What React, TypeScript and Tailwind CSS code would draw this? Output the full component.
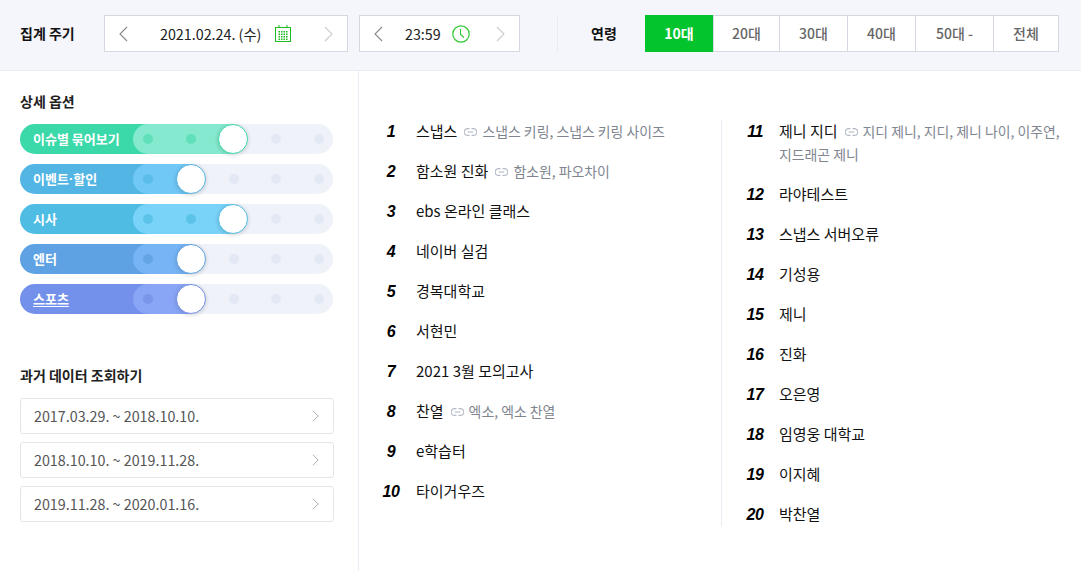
import React from 'react';

const FONT = "font-['Noto_Sans_CJK_KR','Noto_Sans',sans-serif]";

const options = [
  { id: 'issue', label: <>이슈별 묶어보기</>, base: 'bg-[#3bd9aa]', light: 'bg-[#84e9ce]', ring: 'border-[#3bd9aa]', dot: 'bg-[#5fe0ba]', step: 2 },
  { id: 'event', label: <>이벤트<span className="font-['Liberation_Sans',sans-serif]">·</span>할인</>, base: 'bg-[#52b5e3]', light: 'bg-[#70c8f7]', ring: 'border-[#52b5e3]', dot: 'bg-[#5bbdea]', step: 1 },
  { id: 'news', label: <>시사</>, base: 'bg-[#4fbde3]', light: 'bg-[#79d3f8]', ring: 'border-[#4fbde3]', dot: 'bg-[#5cc3e8]', step: 2 },
  { id: 'enter', label: <>엔터</>, base: 'bg-[#5ea2e3]', light: 'bg-[#76b4f6]', ring: 'border-[#5ea2e3]', dot: 'bg-[#64a5e6]', step: 1 },
  { id: 'sports', label: <span className="underline underline-offset-2">스포츠</span>, base: 'bg-[#7391ea]', light: 'bg-[#88a5f6]', ring: 'border-[#7391ea]', dot: 'bg-[#7a96ea]', step: 1 },
];

const history = ['2017.03.29. ~ 2018.10.10.', '2018.10.10. ~ 2019.11.28.', '2019.11.28. ~ 2020.01.16.'];

const ages = [
  { label: '10대', w: 'w-[68px]' },
  { label: '20대', w: 'w-[66px]' },
  { label: '30대', w: 'w-[68px]' },
  { label: '40대', w: 'w-[68px]' },
  { label: '50대 -', w: 'w-[78px]' },
  { label: '전체', w: 'w-[65px]' },
];

const left = [
  { n: 1, t: '스냅스', sub: '스냅스 키링, 스냅스 키링 사이즈' },
  { n: 2, t: '함소원 진화', sub: '함소원, 파오차이' },
  { n: 3, t: 'ebs 온라인 클래스' },
  { n: 4, t: '네이버 실검' },
  { n: 5, t: '경복대학교' },
  { n: 6, t: '서현민' },
  { n: 7, t: '2021 3월 모의고사' },
  { n: 8, t: '찬열', sub: '엑소, 엑소 찬열' },
  { n: 9, t: 'e학습터' },
  { n: 10, t: '타이거우즈' },
];

const right = [
  { n: 11, t: '제니 지디', sub: '지디 제니, 지디, 제니 나이, 이주연, 지드래곤 제니' },
  { n: 12, t: '라야테스트' },
  { n: 13, t: '스냅스 서버오류' },
  { n: 14, t: '기성용' },
  { n: 15, t: '제니' },
  { n: 16, t: '진화' },
  { n: 17, t: '오은영' },
  { n: 18, t: '임영웅 대학교' },
  { n: 19, t: '이지혜' },
  { n: 20, t: '박찬열' },
];

function Chevron({ dir, className }: { dir: 'left' | 'right'; className: string }) {
  return (
    <svg width="9" height="16" viewBox="0 0 9 16" fill="none" className={className}>
      <path d={dir === 'left' ? 'M8 1 1 8l7 7' : 'M1 1l7 7-7 7'} stroke="currentColor" strokeWidth="1.1" />
    </svg>
  );
}

function CalendarIcon() {
  const cells = [];
  for (let r = 0; r < 4; r++) {
    for (let c = 0; c < 4; c++) {
      cells.push(<rect key={`${r}-${c}`} x={3.5 + c * 2.5} y={6 + r * 2.5} width="1.5" height="1.5" fill="#1fbb1f" />);
    }
  }
  return (
    <svg width="16" height="17" viewBox="0 0 16 17" fill="none">
      <rect x="0.5" y="2.5" width="15" height="14" stroke="#1fbb1f" />
      <path d="M4 0v3M12 0v3" stroke="#1fbb1f" />
      {cells}
    </svg>
  );
}

function ClockIcon() {
  return (
    <svg width="18" height="18" viewBox="0 0 18 18" fill="none">
      <circle cx="9" cy="9" r="8.2" stroke="#2fc72f" strokeWidth="1.2" />
      <path d="M8.5 4v5.5l3.5 3" stroke="#2fc72f" strokeWidth="1.1" />
    </svg>
  );
}

function LinkIcon() {
  return (
    <svg width="13" height="8" viewBox="0 0 13 8" fill="none" className="inline-block align-[1px] ml-[7px] mr-[5px]">
      <path d="M5.5 0.6H3.6a3.4 3.4 0 0 0 0 6.8h1.9M7.5 0.6h1.9a3.4 3.4 0 0 1 0 6.8H7.5" stroke="#b3b9c6" strokeWidth="1.1" />
      <path d="M3.8 4h5.4" stroke="#b3b9c6" strokeWidth="1.1" />
    </svg>
  );
}

function Toggle({ o }: { o: (typeof options)[number] }) {
  const dotColor = (i: number) => (i <= o.step - 1 ? o.dot : 'bg-[#e2e8f4]');
  return (
    <div className="relative h-[30px] w-[313px] rounded-full bg-[#eff2f9]">
      <div className={`h-full w-[130px] rounded-l-full flex items-center pl-[13px] text-[13px] font-bold text-white ${o.base}`}>
        {o.label}
      </div>
      <div className={`absolute left-[113px] top-0 h-full rounded-l-[15px] ${o.step === 2 ? 'w-[100px]' : 'w-[58px]'} ${o.light}`} />
      <div className="absolute left-[123px] top-[10px] flex gap-[32.75px]">
        {[0, 1, 2, 3, 4].map((i) => (
          <span key={i} className={`h-[10px] w-[10px] rounded-full ${dotColor(i)}`} />
        ))}
      </div>
      <div
        className={`absolute top-0 h-[30px] w-[30px] rounded-full border bg-white shadow-[0_1px_4px_rgba(0,0,0,0.18)] ${o.ring} ${o.step === 2 ? 'left-[198px]' : 'left-[156px]'}`}
      />
    </div>
  );
}

function Row({ item, numClass }: { item: { n: number; t: string; sub?: string }; numClass: string }) {
  return (
    <li className="flex mb-[17px] last:mb-0 text-[15px] leading-[23px]">
      <span className={`shrink-0 text-center font-['Liberation_Sans',sans-serif] text-[16px] font-bold italic tracking-[-0.5px] text-black ${numClass}`}>
        {item.n}
      </span>
      <p className="min-w-0 -translate-y-px break-keep text-[#111]">
        {item.t}
        {item.sub && (
          <>
            <LinkIcon />
            <span className="text-[13.9px] leading-none text-[#80858f]">{item.sub}</span>
          </>
        )}
      </p>
    </li>
  );
}

export default function App() {
  return (
    <div className={`h-[571px] w-[1081px] overflow-hidden bg-white ${FONT}`}>
      <header className="flex h-[71px] items-start border-b border-[#e9ecf2] bg-[#f5f6fb] pl-[20px] pt-[15px]">
        <h2 className="w-[84px] text-[14px] font-bold leading-[36px] text-[#111]">집계 주기</h2>

        <div className="flex h-[37px] w-[244px] items-center border border-[#d5d8e0] bg-white px-[14px] text-[14.3px] text-[#222]">
          <Chevron dir="left" className="text-[#888]" />
          <span className="ml-[32px] w-[105px] whitespace-nowrap">2021.02.24. (수)</span>
          <span className="ml-[10px] flex"><CalendarIcon /></span>
          <Chevron dir="right" className="ml-auto text-[#ccc]" />
        </div>

        <div className="ml-[11px] flex h-[37px] w-[161px] items-center border border-[#d5d8e0] bg-white px-[14px] text-[14.3px] text-[#222]">
          <Chevron dir="left" className="text-[#888]" />
          <span className="ml-[22px]">23:59</span>
          <span className="ml-[11px] flex"><ClockIcon /></span>
          <Chevron dir="right" className="ml-auto text-[#ccc]" />
        </div>

        <div className="ml-[37px] h-[37px] w-[88px] border-l border-[#e9ecf2] pl-[33px] text-[14px] font-bold leading-[36px] text-[#111]">
          연령
        </div>

        <div className="flex h-[37px] border border-l-0 border-[#d5d8e0] bg-white">
          {ages.map((a, i) => (
            <button
              key={a.label}
              className={
                i === 0
                  ? `-my-px flex items-center justify-center bg-[#03c42d] text-[14px] font-bold text-white ${a.w}`
                  : `flex items-center justify-center border-l border-[#d5d8e0] text-[14px] font-medium text-[#666] ${a.w}`
              }
            >
              {a.label}
            </button>
          ))}
        </div>
      </header>

      <div className="flex h-[500px]">
        <aside className="w-[359px] shrink-0 border-r border-[#e9ecf2] pl-[20px] pt-[20px]">
          <h3 className="mb-[13px] text-[14px] font-bold leading-[20px] text-[#222]">상세 옵션</h3>
          <div className="flex flex-col gap-[10px]">
            {options.map((o) => (
              <Toggle key={o.id} o={o} />
            ))}
          </div>

          <h3 className="mb-[13px] mt-[51px] text-[14px] font-bold leading-[20px] text-[#222]">과거 데이터 조회하기</h3>
          <div className="flex flex-col gap-[8px]">
            {history.map((h) => (
              <div
                key={h}
                className="flex h-[36px] w-[314px] items-center justify-between rounded-[3px] border border-[#e3e5ea] pl-[13px] pr-[14px] text-[14.3px] text-[#555]"
              >
                {h}
                <Chevron dir="right" className="h-[12px] w-[7px] text-[#999]" />
              </div>
            ))}
          </div>
        </aside>

        <main className="flex flex-1 items-start pt-[49px]">
          <ol className="w-[362px] shrink-0 pl-[16px]">
            {left.map((item) => (
              <Row key={item.n} item={item} numClass="w-[41px] pr-[9px]" />
            ))}
          </ol>
          <ol className="flex-1 border-l border-[#e9ecf2] pl-[17px] pr-[16px]">
            {right.map((item) => (
              <Row key={item.n} item={item} numClass="w-[40px] pr-[8px]" />
            ))}
          </ol>
        </main>
      </div>
    </div>
  );
}
